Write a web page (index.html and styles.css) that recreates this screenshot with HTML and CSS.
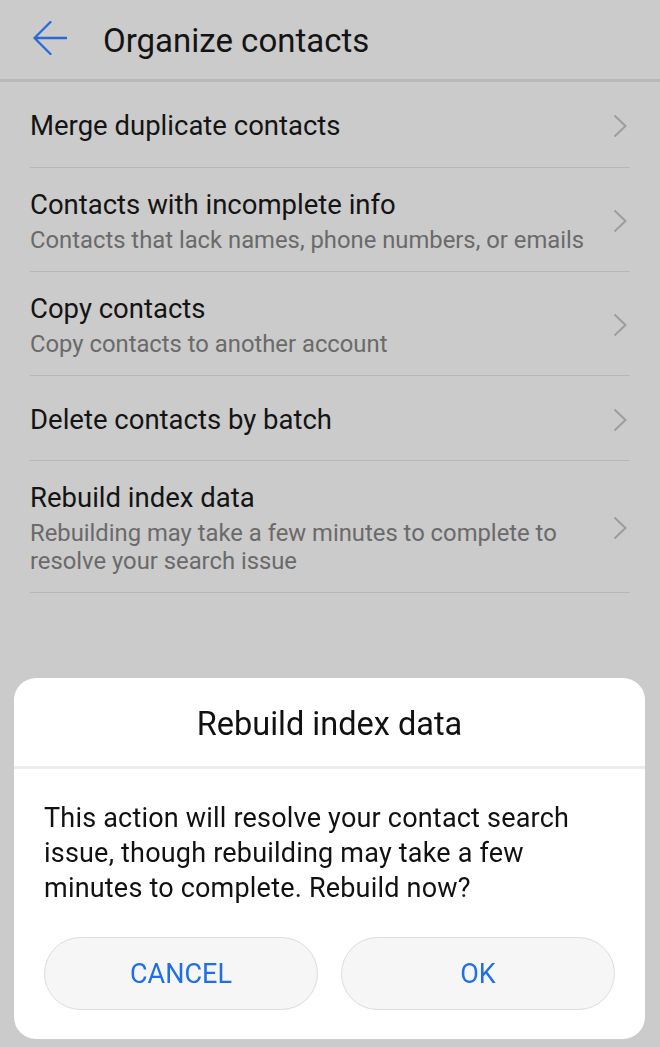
FILE: index.html
```html
<!DOCTYPE html>
<html lang="en">
<head>
<meta charset="utf-8">
<title>Organize contacts</title>
<link rel="stylesheet" href="styles.css">
</head>
<body>
<div class="page">
  <header class="appbar">
    <svg class="back" width="34" height="34" viewBox="0 0 34 34" aria-hidden="true">
      <path d="M33.5 17 H1.5 M17.5 1 L1.5 17 L17.5 33" fill="none" stroke="#2a6ad8" stroke-width="2.3" stroke-linecap="round" stroke-linejoin="round"/>
    </svg>
    <h1 class="appbar-title">Organize contacts</h1>
  </header>

  <ul class="list">
    <li class="row">
      <div class="row-text"><div class="row-title">Merge duplicate contacts</div></div>
      <svg class="chev" width="14" height="24" viewBox="0 0 14 24"><path d="M1.5 1.5 L12.5 12 L1.5 22.5" fill="none" stroke="#9d9d9d" stroke-width="2"/></svg>
    </li>
    <li class="row">
      <div class="row-text">
        <div class="row-title">Contacts with incomplete info</div>
        <div class="row-sub">Contacts that lack names, phone numbers, or emails</div>
      </div>
      <svg class="chev" width="14" height="24" viewBox="0 0 14 24"><path d="M1.5 1.5 L12.5 12 L1.5 22.5" fill="none" stroke="#9d9d9d" stroke-width="2"/></svg>
    </li>
    <li class="row">
      <div class="row-text">
        <div class="row-title">Copy contacts</div>
        <div class="row-sub">Copy contacts to another account</div>
      </div>
      <svg class="chev" width="14" height="24" viewBox="0 0 14 24"><path d="M1.5 1.5 L12.5 12 L1.5 22.5" fill="none" stroke="#9d9d9d" stroke-width="2"/></svg>
    </li>
    <li class="row">
      <div class="row-text"><div class="row-title">Delete contacts by batch</div></div>
      <svg class="chev" width="14" height="24" viewBox="0 0 14 24"><path d="M1.5 1.5 L12.5 12 L1.5 22.5" fill="none" stroke="#9d9d9d" stroke-width="2"/></svg>
    </li>
    <li class="row">
      <div class="row-text">
        <div class="row-title">Rebuild index data</div>
        <div class="row-sub">Rebuilding may take a few minutes to complete to resolve your search issue</div>
      </div>
      <svg class="chev" width="14" height="24" viewBox="0 0 14 24"><path d="M1.5 1.5 L12.5 12 L1.5 22.5" fill="none" stroke="#9d9d9d" stroke-width="2"/></svg>
    </li>
  </ul>
</div>

<div class="scrim">
  <div class="dialog" role="dialog">
    <div class="dialog-title">Rebuild index data</div>
    <div class="dialog-body">This action will resolve your contact search issue, though rebuilding may take a few minutes to complete. Rebuild now?</div>
    <div class="dialog-actions">
      <button class="btn">CANCEL</button>
      <button class="btn">OK</button>
    </div>
  </div>
</div>
</body>
</html>
```

FILE: styles.css
```css
* { box-sizing: border-box; }
html, body {
  margin: 0;
  padding: 0;
  height: 100%;
}
body {
  background: #cbcbcb;
  font-family: Roboto, "Noto Sans", "Liberation Sans", sans-serif;
  color: #111;
}
.page {
  min-height: 100%;
}
.appbar {
  height: 82px;
  padding: 2px 0 0 33px;
  border-bottom: 3px solid #b9b9b9;
  display: flex;
  align-items: center;
}
.back {
  flex: none;
  margin-bottom: 5px;
}
.appbar-title {
  margin: 0 0 0 36px;
  font-size: 33px;
  font-weight: 400;
  line-height: 40px;
  color: #141414;
}
.list {
  list-style: none;
  margin: 0;
  padding: 0 30px;
}
.row {
  display: flex;
  align-items: center;
  min-height: 85px;
  padding: 20px 0 17px;
  border-bottom: 1px solid #b7b7b7;
}
.row:first-child { min-height: 86px; }
.row-text {
  flex: 1;
  min-width: 0;
  padding-right: 20px;
}
.row-title {
  font-size: 27.5px;
  line-height: 34px;
  color: #141414;
}
.row-sub {
  margin-top: 4px;
  font-size: 23.8px;
  line-height: 28px;
  color: #6a6a6a;
}
.chev {
  flex: none;
  margin-right: 3px;
}
.scrim {
  position: fixed;
  inset: 0;
  display: flex;
  flex-direction: column;
  justify-content: flex-end;
  padding: 0 15px 8px 14px;
}
.dialog {
  background: #fff;
  border-radius: 22px;
  overflow: hidden;
}
.dialog-title {
  padding: 26px 20px 22px;
  text-align: center;
  font-size: 32.5px;
  line-height: 40px;
  color: #111;
  border-bottom: 3px solid #ececec;
}
.dialog-body {
  padding: 32px 30px 0;
  font-size: 27px;
  letter-spacing: 0.2px;
  line-height: 35px;
  color: #111;
}
.dialog-actions {
  display: flex;
  gap: 23px;
  padding: 31px 30px 29px;
}
.btn {
  flex: 1;
  height: 73px;
  border: 1px solid #dcdcdc;
  border-radius: 37px;
  background: #f6f6f6;
  color: #1f6fe5;
  font-family: Roboto, "Noto Sans", "Liberation Sans", sans-serif;
  font-size: 27px;
  padding: 0;
}
```
